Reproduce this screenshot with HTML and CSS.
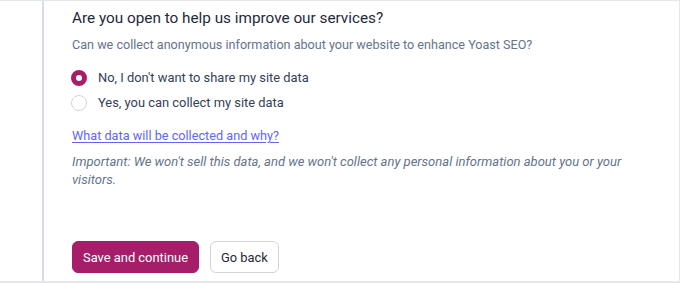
FILE: index.html
```html
<!DOCTYPE html>
<html>
<head>
<meta charset="utf-8">
<link rel="stylesheet" href="styles.css">
</head>
<body>
<div class="frame">
  <div class="gutter"></div>
  <div class="content">
    <h2 class="title">Are you open to help us improve our services?</h2>
    <p class="intro">Can we collect anonymous information about your website to enhance Yoast SEO?</p>
    <div class="options">
      <label class="option"><span class="radio checked"></span><span>No, I don't want to share my site data</span></label>
      <label class="option"><span class="radio"></span><span>Yes, you can collect my site data</span></label>
    </div>
    <a class="link" href="#">What data will be collected and why?</a>
    <p class="note">Important: We won't sell this data, and we won't collect any personal information about you or your visitors.</p>
    <div class="actions">
      <button class="btn primary">Save and continue</button>
      <button class="btn secondary">Go back</button>
    </div>
  </div>
</div>
</body>
</html>
```
FILE: styles.css
```css
* { box-sizing: border-box; }
html, body { margin: 0; padding: 0; background: #fff; }
body { font-family: Roboto, "Liberation Sans", sans-serif; width: 680px; height: 283px; overflow: hidden; }
.frame {
  display: flex;
  width: 680px;
  height: 283px;
  border-top: 1px solid #e5e7eb;
  border-right: 1px solid #e5e7eb;
  border-bottom: 2px solid #e5e7eb;
}
.gutter {
  width: 44px;
  flex: none;
  border-right: 2px solid #d7dde8;
}
.content {
  padding: 5px 0 0 27px;
  display: flex;
  flex-direction: column;
  align-items: flex-start;
}
.title {
  margin: 0 0 0 1px;
  font-size: 15.3px;
  font-weight: 400;
  line-height: 24px;
  color: #1e293b;
}
.intro {
  margin: 5px 0 0 1px;
  font-size: 12.6px;
  line-height: 20px;
  color: #64748b;
}
.options {
  margin-top: 13px;
  display: flex;
  flex-direction: column;
  gap: 5px;
}
.option {
  display: flex;
  align-items: center;
  gap: 11px;
  font-size: 12.9px;
  line-height: 20px;
  color: #334155;
}
.radio {
  width: 16px;
  height: 16px;
  border-radius: 50%;
  border: 1px solid #d1d5db;
  background: #fff;
  flex: none;
}
.radio.checked {
  border: 5px solid #a61e69;
  background: #fff;
}
.link {
  margin: 13px 0 0 1px;
  font-size: 12.7px;
  line-height: 20px;
  color: #6366f1;
  text-decoration: underline;
  text-underline-offset: 2px;
}
.note {
  margin: 7px 0 0 1px;
  font-size: 13px;
  line-height: 18px;
  font-style: italic;
  color: #64748b;
  width: 575px;
}
.actions {
  margin: 52px 0 0 1px;
  display: flex;
  gap: 11px;
}
.btn {
  font-family: inherit;
  font-size: 12.9px;
  height: 32px;
  border-radius: 6px;
  padding: 0 10px;
  white-space: nowrap;
  cursor: pointer;
}
.primary {
  background: #a61e69;
  color: #fff;
  border: 1px solid #a61e69;
}
.secondary {
  background: #fff;
  color: #1e293b;
  border: 1px solid #d1d5db;
}
```
